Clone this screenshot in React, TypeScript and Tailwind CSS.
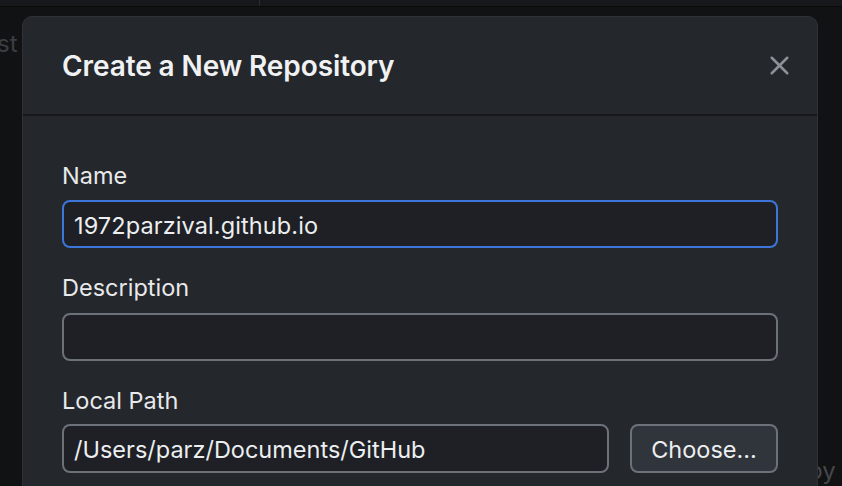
import { X } from 'lucide-react'

const font = { fontFamily: 'Inter, "Noto Sans", sans-serif' }

export default function App() {
    return (
        <div className="relative h-[486px] w-[842px] overflow-hidden bg-[#111214] text-white" style={font}>
            {/* app window behind */}
            <div className="flex h-[7px] border-b border-[#0a0a0b] bg-[#17181b]">
                <div className="w-[260px] border-r border-[#2a2b2f]" />
            </div>
            <div className="absolute left-[-3px] top-[26px] text-[24px] text-[#3c3d41]">st</div>
            <div className="absolute left-[808px] top-[453px] text-[24px] text-[#46474b]">by</div>

            {/* dialog */}
            <div className="absolute left-[22px] top-[16px] w-[796px] h-[500px] rounded-[10px] border border-[#2e3137] bg-[#24272c]">
                <div className="flex h-[99px] items-center justify-between border-b-2 border-[#17181b] pl-[39px] pr-[22px]">
                    <h1 className="text-[28px] font-semibold tracking-[-0.1px] text-[#f0f1f3]">Create a New Repository</h1>
                    <X className="h-[31px] w-[31px] text-[#8b9099]" strokeWidth={2} />
                </div>

                <div className="flex flex-col px-[39px] pt-[46px]">
                    <label className="text-[23.5px] leading-[28px] text-[#e8e9eb]">Name</label>
                    <div className="mt-[10px] flex h-[48px] items-center rounded-[8px] border-2 border-[#3b76d8] bg-[#1e2025] px-[10px] pt-[3px] text-[23.5px] tracking-[0.1px] text-[#eceef0]">
                        1972parzival.github.io
                    </div>

                    <label className="mt-[26px] text-[23.5px] leading-[28px] text-[#e8e9eb]">Description</label>
                    <div className="mt-[11px] h-[48px] rounded-[8px] border-2 border-[#6c717a] bg-[#1e2025]" />

                    <label className="mt-[26px] text-[23.5px] leading-[28px] text-[#e8e9eb]">Local Path</label>
                    <div className="mt-[9px] flex gap-[21px]">
                        <div className="flex h-[49px] flex-1 items-center rounded-[8px] border-2 border-[#6c717a] bg-[#1e2025] px-[10px] pt-[3px] text-[23.5px] text-[#eceef0]">
                            /Users/parz/Documents/GitHub
                        </div>
                        <button className="h-[49px] w-[148px] rounded-[8px] border-2 border-[#6c717a] bg-[#30343b] pt-[3px] text-[23.5px] text-[#eceef0]">
                            Choose...
                        </button>
                    </div>
                </div>
            </div>
        </div>
    )
}
